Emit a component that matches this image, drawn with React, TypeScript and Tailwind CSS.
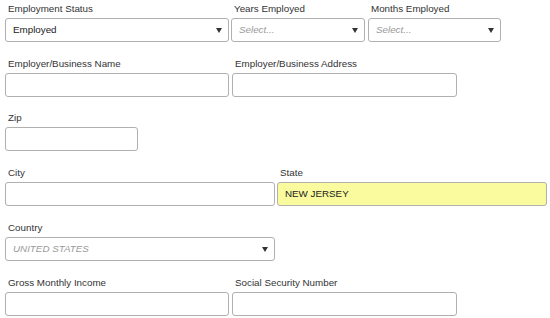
import React from "react";

const font = { fontFamily: '"Liberation Sans", Arial, sans-serif' };

function Arrow() {
  return (
    <svg width="6" height="5" viewBox="0 0 6 5" className="shrink-0">
      <path d="M0 0 L6 0 L3 5 Z" fill="#333" />
    </svg>
  );
}

function Label({ children }: { children: React.ReactNode }) {
  return (
    <div className="h-[18px] pt-[2px] pl-[3px] text-[9.8px] leading-[14px] text-[#333] whitespace-nowrap">
      {children}
    </div>
  );
}

function Field({
  label,
  w,
  kind = "input",
  value,
  placeholder,
  yellow,
}: {
  label: string;
  w: string;
  kind?: "input" | "select";
  value?: string;
  placeholder?: string;
  yellow?: boolean;
}) {
  return (
    <div className={w}>
      <Label>{label}</Label>
      <div
        className={`h-[24px] rounded-[3px] border border-[#b0b0b0] flex items-center pl-[7px] pr-[6px] text-[9.8px] ${
          yellow ? "bg-[#fafa9e]" : "bg-white"
        }`}
      >
        <div className="flex-1 truncate">
          {value ? (
            <span className="text-[#222]">{value}</span>
          ) : placeholder ? (
            <span className="italic text-[#9a9a9a]">{placeholder}</span>
          ) : null}
        </div>
        {kind === "select" && <Arrow />}
      </div>
    </div>
  );
}

export default function App() {
  return (
    <div className="w-[550px] h-[318px] bg-white overflow-hidden pl-[5px]" style={font}>
      <div className="flex mb-[13px]">
        <Field label="Employment Status" w="w-[224px] mr-[2px]" kind="select" value="Employed" />
        <Field label="Years Employed" w="w-[134px] mr-[3px]" kind="select" placeholder="Select..." />
        <Field label="Months Employed" w="w-[133px]" kind="select" placeholder="Select..." />
      </div>
      <div className="flex gap-[3px] mb-[12px]">
        <Field label="Employer/Business Name" w="w-[224px]" />
        <Field label="Employer/Business Address" w="w-[225px]" />
      </div>
      <div className="flex mb-[13px]">
        <Field label="Zip" w="w-[133px]" />
      </div>
      <div className="flex gap-[2px] mb-[13px]">
        <Field label="City" w="w-[270px]" />
        <Field label="State" w="w-[270px]" value="NEW JERSEY" yellow />
      </div>
      <div className="flex mb-[13px]">
        <Field label="Country" w="w-[270px]" kind="select" placeholder="UNITED STATES" />
      </div>
      <div className="flex gap-[3px]">
        <Field label="Gross Monthly Income" w="w-[224px]" />
        <Field label="Social Security Number" w="w-[225px]" />
      </div>
    </div>
  );
}
